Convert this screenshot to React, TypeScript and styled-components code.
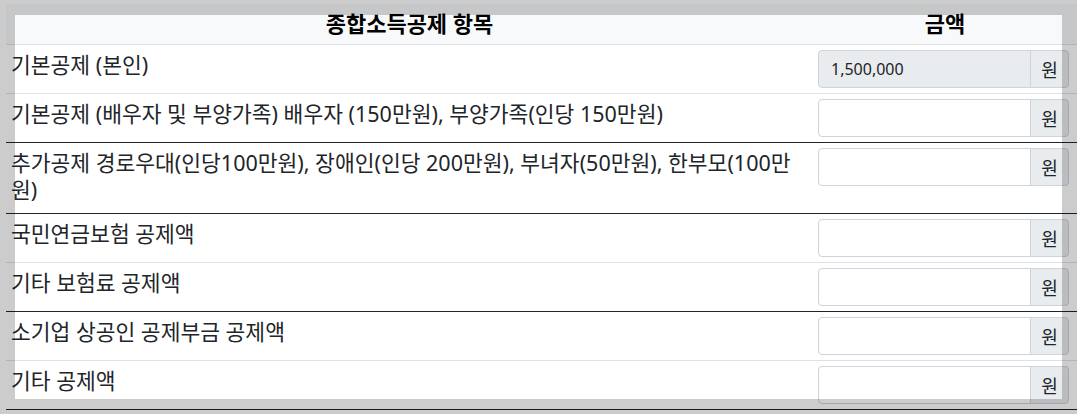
import React from "react";
import styled, { createGlobalStyle } from "styled-components";

const Global = createGlobalStyle`
  html, body { margin: 0; padding: 0; background: #fff; overflow: hidden; }
  body {
    font-family: "Noto Sans", "Noto Sans CJK KR", sans-serif;
    color: #212529;
  }
`;

const Page = styled.div`
  padding: 4px 0 0 6px;
  width: 1077px;
  box-sizing: border-box;
`;

const Table = styled.table`
  width: 1071px;
  border-collapse: collapse;
  table-layout: fixed;
  font-size: 21.5px;
  line-height: 27px;
`;

const HeadRow = styled.tr`
  background: #f8f9fa;
  border-bottom: 1px solid #dee2e6;
`;

const Th = styled.th<{ $w: number }>`
  box-sizing: border-box;
  width: ${(p) => p.$w}px;
  padding: 6px 5px 7px;
  font-size: 22px;
  font-weight: 700;
  color: #000;
  text-align: center;
`;

const Row = styled.tr<{ $strong?: boolean }>`
  border-bottom: 1px solid ${(p) => (p.$strong ? "#212529" : "#dee2e6")};
`;

const LabelCell = styled.td`
  padding: 6px 5px 10px 5px;
  vertical-align: top;
  text-align: left;
`;

const InputCell = styled.td`
  padding: 5px 8px 5px 5px;
  vertical-align: top;
`;

const Group = styled.div`
  display: flex;
  width: 251px;
  height: 38px;
`;

const Field = styled.input<{ $ro?: boolean }>`
  flex: 1;
  min-width: 0;
  box-sizing: border-box;
  height: 38px;
  padding: 6px 12px;
  font-family: "Noto Sans", "Noto Sans CJK KR", sans-serif;
  font-size: 16px;
  color: #212529;
  background: ${(p) => (p.$ro ? "#e9ecef" : "#fff")};
  border: 1px solid #ced4da;
  border-radius: 4px 0 0 4px;
  outline: none;
`;

const Addon = styled.span`
  display: flex;
  align-items: center;
  justify-content: center;
  box-sizing: border-box;
  width: 39px;
  margin-left: -1px;
  height: 38px;
  font-family: "Noto Sans CJK KR", sans-serif;
  font-size: 18px;
  background: #e9ecef;
  border: 1px solid #ced4da;
  border-radius: 0 4px 4px 0;
  color: #212529;
`;

const Spotlight = styled.div`
  position: fixed;
  left: 15px;
  top: 15px;
  width: 1047px;
  height: 384px;
  box-shadow: 0 0 0 3000px rgba(0, 0, 0, 0.2);
  pointer-events: none;
`;

type Item = { label: string; value?: string; strong?: boolean };

const items: Item[] = [
  { label: "기본공제 (본인)", value: "1,500,000" },
  { label: "기본공제 (배우자 및 부양가족) 배우자 (150만원), 부양가족(인당 150만원)", strong: true },
  {
    label:
      "추가공제 경로우대(인당100만원), 장애인(인당 200만원), 부녀자(50만원), 한부모(100만원)",
    strong: true,
  },
  { label: "국민연금보험 공제액" },
  { label: "기타 보험료 공제액", strong: true },
  { label: "소기업 상공인 공제부금 공제액" },
  { label: "기타 공제액", strong: true },
];

export default function App() {
  return (
    <>
      <Global />
      <Page>
        <Table>
          <thead>
            <HeadRow>
              <Th $w={807}>종합소득공제 항목</Th>
              <Th $w={264}>금액</Th>
            </HeadRow>
          </thead>
          <tbody>
            {items.map((it, i) => (
              <Row key={i} $strong={it.strong}>
                <LabelCell>{it.label}</LabelCell>
                <InputCell>
                  <Group>
                    <Field
                      $ro={!!it.value}
                      readOnly={!!it.value}
                      defaultValue={it.value ?? ""}
                    />
                    <Addon>원</Addon>
                  </Group>
                </InputCell>
              </Row>
            ))}
          </tbody>
        </Table>
      </Page>
      <Spotlight />
    </>
  );
}
